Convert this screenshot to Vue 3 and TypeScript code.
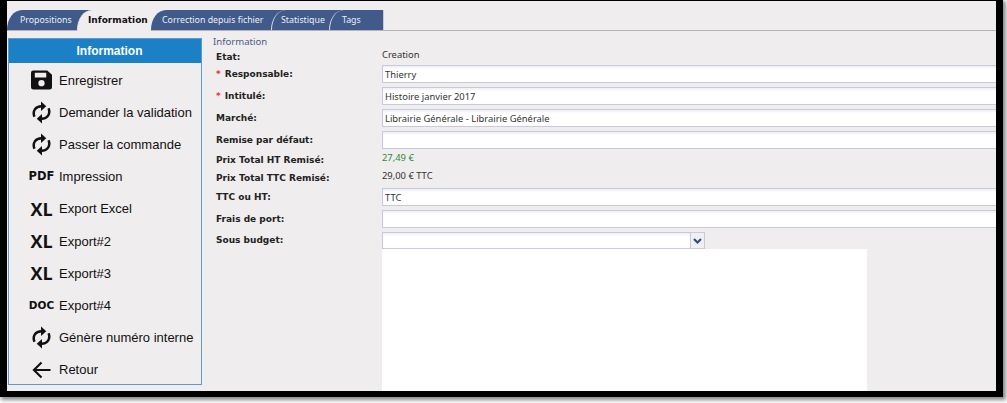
<script setup lang="ts">
const tabs = [
  { label: 'Propositions', w: 70, cls: 'first', pad: 13 },
  { label: 'Information', w: 74, cls: 'active', pad: 10 },
  { label: 'Correction depuis fichier', w: 120, cls: 'after-active', pad: 11 },
  { label: 'Statistique', w: 58, cls: '', pad: 9 },
  { label: 'Tags', w: 54, cls: '', pad: 12 },
]
const menu = [
  { label: 'Enregistrer', icon: 'save' },
  { label: 'Demander la validation', icon: 'sync' },
  { label: 'Passer la commande', icon: 'sync' },
  { label: 'Impression', icon: 'pdf' },
  { label: 'Export Excel', icon: 'xl' },
  { label: 'Export#2', icon: 'xl' },
  { label: 'Export#3', icon: 'xl' },
  { label: 'Export#4', icon: 'doc' },
  { label: 'Génère numéro interne', icon: 'sync' },
  { label: 'Retour', icon: 'back' },
]
const rows = [
  { label: 'Etat:', text: 'Creation', h: 17, cls: 'plain' },
  { label: 'Responsable:', req: true, input: 'Thierry', h: 22 },
  { label: 'Intitulé:', req: true, input: 'Histoire janvier 2017', h: 22 },
  { label: 'Marché:', input: 'Librairie Générale - Librairie Générale', h: 22 },
  { label: 'Remise par défaut:', input: '', h: 20 },
  { label: 'Prix Total HT Remisé:', text: '27,49 €', h: 18, cls: 'green' },
  { label: 'Prix Total TTC Remisé:', text: '29,00 € TTC', h: 19, cls: 'plain' },
  { label: 'TTC ou HT:', input: 'TTC', h: 22 },
  { label: 'Frais de port:', input: '', h: 22 },
]
</script>

<template>
  <div class="shot">
    <div class="frame">
      <nav class="tabs">
        <div v-for="t in tabs" :key="t.label" class="tab-slot" :class="t.cls" :style="{ width: t.w + 'px' }">
          <div class="tab" :style="{ paddingLeft: t.pad + 'px' }">{{ t.label }}</div>
        </div>
      </nav>
      <div class="body">
        <aside class="side">
          <header class="side-head">Information</header>
          <ul class="menu">
            <li v-for="m in menu" :key="m.label" class="item">
              <span class="ico">
                <svg v-if="m.icon === 'save'" width="21" height="20" viewBox="0 0 22 20">
                  <path fill="#111" fill-rule="evenodd" d="M2.5 0H17l5 4.5V17.5a2.5 2.5 0 0 1-2.5 2.5H2.5A2.5 2.5 0 0 1 0 17.5V2.5A2.5 2.5 0 0 1 2.5 0ZM4 2.5V7.5H16V2.5ZM11 10a3.3 3.3 0 1 0 0 6.6 3.3 3.3 0 0 0 0-6.6Z" />
                </svg>
                <svg v-else-if="m.icon === 'sync'" width="19" height="23" viewBox="0 0 20 24">
                  <g fill="none" stroke="#111" stroke-width="2.6">
                    <path d="M2.6 16.5C.2 10.5 3.6 5.5 10 5.5" />
                    <path d="M17.4 7.5c2.4 6-1 11-7.4 11" />
                  </g>
                  <path fill="#111" d="M9.5 0.5 15 5.5 9.5 10.5Z" />
                  <path fill="#111" d="M10.5 13.5 5 18.5 10.5 23.5Z" />
                </svg>
                <svg v-else-if="m.icon === 'back'" width="19" height="18" viewBox="0 0 20 18">
                  <path fill="none" stroke="#111" stroke-width="2.2" d="M19.5 9H2M10 1 2 9l8 8" />
                </svg>
                <span v-else-if="m.icon === 'pdf'" class="glyph pdf">PDF</span>
                <span v-else-if="m.icon === 'xl'" class="glyph xl">XL</span>
                <span v-else class="glyph doc">DOC</span>
              </span>
              <span class="item-label">{{ m.label }}</span>
            </li>
          </ul>
        </aside>
        <main class="main">
          <div class="legend">Information</div>
          <div v-for="r in rows" :key="r.label" class="row" :style="{ height: r.h + 'px' }">
            <label class="lab"><span v-if="r.req" class="req">*</span>{{ r.label }}</label>
            <div v-if="r.input !== undefined" class="input">{{ r.input }}</div>
            <div v-else class="val" :class="r.cls">{{ r.text }}</div>
          </div>
          <div class="row select-row">
            <label class="lab lab-select">Sous budget:</label>
            <div class="select">
              <div class="select-box"></div>
              <div class="select-btn">
                <svg width="9" height="6" viewBox="0 0 9 6"><path fill="none" stroke="#2d4a86" stroke-width="2" d="M1 1l3.5 3.5L8 1" /></svg>
              </div>
            </div>
          </div>
          <div class="sheet-row"><div class="sheet"></div></div>
        </main>
      </div>
    </div>
  </div>
</template>

<style>
html, body { margin: 0; background: #fff; overflow: hidden; }
</style>

<style scoped>
.shot { width: 1007px; height: 403px; overflow: hidden; background: #fff; }
.frame {
  width: 1003px; height: 397px; box-sizing: border-box;
  border-style: solid; border-color: #000; border-width: 1px 7px 6px 7px;
  background: #efedee; box-shadow: 2px 2px 4px 1px #8a8a8a;
  display: flex; flex-direction: column; overflow: hidden;
  font-family: "Noto Sans", sans-serif; color: #333;
}
.tabs { height: 20px; margin-top: 9px; flex: none; display: flex; border-bottom: 1px solid #b5b3b5; box-sizing: content-box; }
.tab-slot { flex: none; background: #3f5a8b; }
.tab-slot.first, .tab-slot.after-active { background: #efedee; }
.tab {
  height: 20px; box-sizing: border-box; line-height: 20px;
  background: #3f5a8b; color: #eef0f6; font-size: 8.8px; white-space: nowrap; overflow: hidden;
  border-top-left-radius: 15px 20px; border-left: 1px solid #dfe1e8;
}
.first .tab { border-left: 0; }
.active .tab { background: #efedee; color: #111; font-family: "DejaVu Sans", sans-serif; font-weight: 700; font-size: 9px; margin-bottom: -1px; height: 21px; }
.after-active .tab { border-left: 0; }
.tab-slot:last-child { border-right: 1px solid #c9c9cf; }
.body { flex: 1; display: flex; min-height: 0; padding-top: 5px; }
.side { width: 194px; height: 347px; box-sizing: border-box; margin: 2px 0 0 1px; border: 1px solid #5a9bd0; flex: none; }
.side-head {
  height: 24px; line-height: 24px; background: #1b80c6; color: #fff; text-align: center; padding-left: 9px;
  font-family: "Liberation Sans", sans-serif; font-size: 12px; font-weight: 700;
}
.menu { list-style: none; margin: 0; padding: 1px 0 0; }
.item { height: 32.2px; display: flex; align-items: center; font-family: "Liberation Sans", sans-serif; font-size: 13px; color: #111; white-space: nowrap; }
.ico { width: 50px; display: flex; justify-content: center; align-items: center; flex: none; color: #111; padding-left: 15px; box-sizing: border-box; }
.glyph { font-weight: 700; white-space: nowrap; line-height: 1; }
.pdf { font-family: "DejaVu Sans", sans-serif; font-size: 11.5px; }
.xl { font-family: "Open Sans", sans-serif; font-size: 18px; }
.doc { font-family: "DejaVu Sans", sans-serif; font-size: 10.5px; }
.main { flex: 1; min-width: 0; padding-left: 11px; overflow: hidden; }
.legend { font-size: 9.6px; color: #4d5c85; line-height: 11px; margin-bottom: 1px; }
.row { display: grid; grid-template-columns: 169px 1fr; align-items: start; }
.lab { font-family: "DejaVu Sans", sans-serif; font-size: 9px; font-weight: 700; color: #222; padding: 3px 0 0 3px; line-height: 13px; white-space: nowrap; }
.lab-select { padding-top: 2px; }
.req { color: #e33; margin-right: 4px; }
.input {
  height: 18px; box-sizing: border-box; border: 1px solid #c8cadb; background: #fff;
  box-shadow: inset 0 2px 2px #f1f2f6;
  font-size: 9.4px; line-height: 17px; padding-left: 2px; margin-right: -20px; color: #333; white-space: nowrap;
}
.val { font-size: 9.4px; line-height: 13px; }
.green { color: #2f8a3a; }
.plain { color: #333; }
.select-row { height: 17px; }
.select { display: flex; width: 323px; height: 17px; }
.select-box { flex: 1; border: 1px solid #c8cadb; background: #fff; box-shadow: inset 0 2px 2px #f1f2f6; }
.select-btn { width: 13px; border: 1px solid #c8cadb; border-left: 0; display: flex; align-items: center; justify-content: center; background: #efeff4; }
.sheet-row { display: grid; grid-template-columns: 169px 485px; height: 150px; }
.sheet { grid-column: 2; background: #fff; }
</style>
